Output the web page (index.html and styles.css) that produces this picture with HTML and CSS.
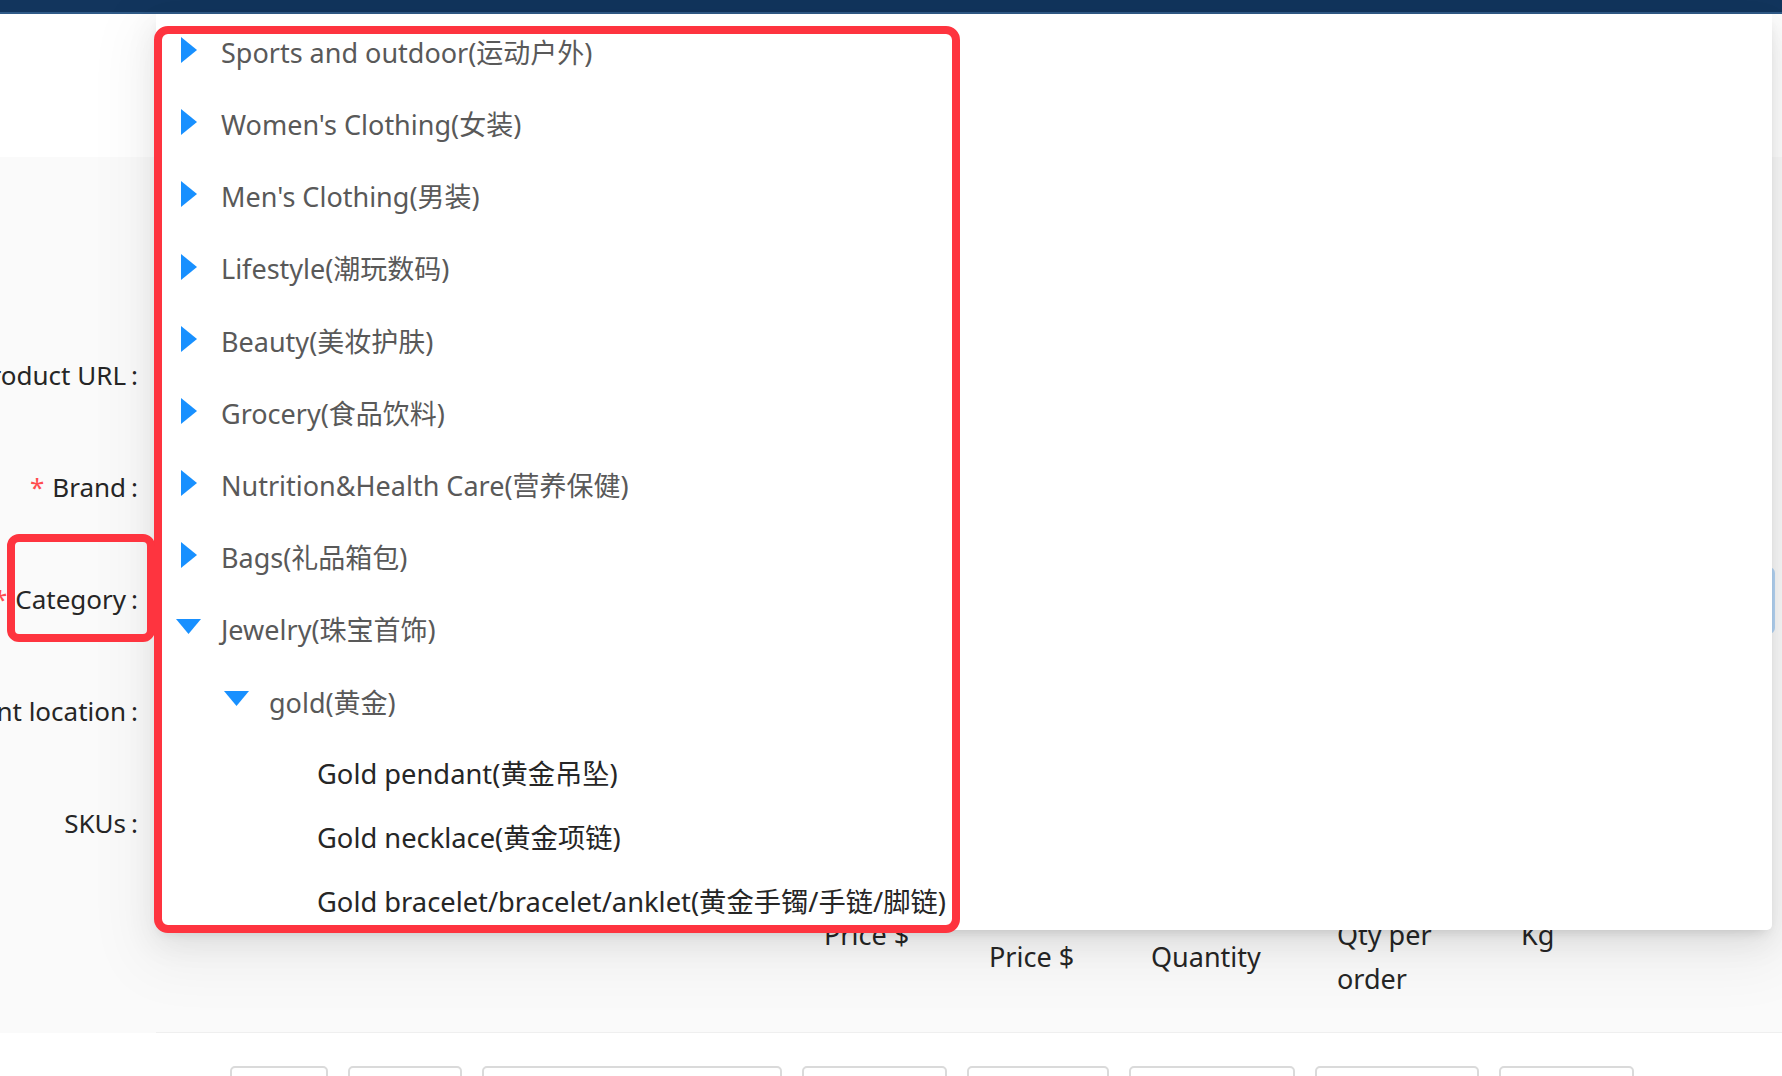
FILE: index.html
```html
<!DOCTYPE html>
<html lang="en">
<head>
<meta charset="utf-8">
<title>Product form - category</title>
<link rel="stylesheet" href="styles.css">
</head>
<body>
<div class="topbar"></div>
<div class="hero"></div>
<div class="form">
  <div class="row">
    <div class="label"><span>Product URL</span><span class="colon">:</span></div>
    <div class="control"></div>
  </div>
  <div class="row">
    <div class="label"><span class="req">*</span><span>Brand</span><span class="colon">:</span></div>
    <div class="control"></div>
  </div>
  <div class="row">
    <div class="label"><span class="req">*</span><span>Category</span><span class="colon">:</span></div>
    <div class="control"><div class="select-focus"></div></div>
  </div>
  <div class="row">
    <div class="label"><span class="req">*</span><span>Shipment location</span><span class="colon">:</span></div>
    <div class="control"></div>
  </div>
  <div class="row">
    <div class="label"><span>SKUs</span><span class="colon">:</span></div>
    <div class="control"></div>
  </div>
  <div class="skus-head">
    <div class="th c1"></div>
    <div class="th c2"></div>
    <div class="th c3"></div>
    <div class="th c4 up">Original<br>Price $</div>
    <div class="th c5">Price $</div>
    <div class="th c6">Quantity</div>
    <div class="th c7 down">Minimum<br>Qty per<br>order</div>
    <div class="th c8 up">Weight<br>Kg</div>
  </div>
</div>
<div class="skus-body">
  <div class="td c1"></div>
  <div class="td c2"></div>
  <div class="td c3"></div>
  <div class="td c4"></div>
  <div class="td c5"></div>
  <div class="td c6"></div>
  <div class="td c7"></div>
  <div class="td c8"></div>
</div>

<div class="dropdown">
  <div class="tree">
    <div class="node lvl0"><span class="sw"><svg class="tri-r" width="16" height="26" viewBox="0 0 16 26"><polygon points="0,0 16,13 0,26"/></svg></span><span class="tt">Sports and outdoor(运动户外)</span></div>
    <div class="node lvl0"><span class="sw"><svg class="tri-r" width="16" height="26" viewBox="0 0 16 26"><polygon points="0,0 16,13 0,26"/></svg></span><span class="tt">Women's Clothing(女装)</span></div>
    <div class="node lvl0"><span class="sw"><svg class="tri-r" width="16" height="26" viewBox="0 0 16 26"><polygon points="0,0 16,13 0,26"/></svg></span><span class="tt">Men's Clothing(男装)</span></div>
    <div class="node lvl0"><span class="sw"><svg class="tri-r" width="16" height="26" viewBox="0 0 16 26"><polygon points="0,0 16,13 0,26"/></svg></span><span class="tt">Lifestyle(潮玩数码)</span></div>
    <div class="node lvl0"><span class="sw"><svg class="tri-r" width="16" height="26" viewBox="0 0 16 26"><polygon points="0,0 16,13 0,26"/></svg></span><span class="tt">Beauty(美妆护肤)</span></div>
    <div class="node lvl0"><span class="sw"><svg class="tri-r" width="16" height="26" viewBox="0 0 16 26"><polygon points="0,0 16,13 0,26"/></svg></span><span class="tt">Grocery(食品饮料)</span></div>
    <div class="node lvl0"><span class="sw"><svg class="tri-r" width="16" height="26" viewBox="0 0 16 26"><polygon points="0,0 16,13 0,26"/></svg></span><span class="tt">Nutrition&amp;Health Care(营养保健)</span></div>
    <div class="node lvl0"><span class="sw"><svg class="tri-r" width="16" height="26" viewBox="0 0 16 26"><polygon points="0,0 16,13 0,26"/></svg></span><span class="tt">Bags(礼品箱包)</span></div>
    <div class="node lvl0"><span class="sw"><svg class="tri-d" width="25" height="15" viewBox="0 0 25 15"><polygon points="0,0 25,0 12.5,15"/></svg></span><span class="tt">Jewelry(珠宝首饰)</span></div>
    <div class="node lvl1"><span class="sw"><svg class="tri-d" width="25" height="15" viewBox="0 0 25 15"><polygon points="0,0 25,0 12.5,15"/></svg></span><span class="tt">gold(黄金)</span></div>
    <div class="leaves">
      <div class="node leaf"><span class="sw"></span><span class="tt">Gold pendant(黄金吊坠)</span></div>
      <div class="node leaf"><span class="sw"></span><span class="tt">Gold necklace(黄金项链)</span></div>
      <div class="node leaf"><span class="sw"></span><span class="tt">Gold bracelet/bracelet/anklet(黄金手镯/手链/脚链)</span></div>
    </div>
  </div>
</div>

<div class="mark mark-panel"></div>
<div class="mark mark-label"></div>
</body>
</html>
```
FILE: styles.css
```css
* { box-sizing: border-box; }
html, body { margin: 0; padding: 0; }
body {
  width: 1782px;
  height: 1076px;
  overflow: hidden;
  position: relative;
  background: #fff;
  font-family: "Noto Sans", "Noto Sans CJK SC", sans-serif;
  color: #262626;
}

.topbar {
  height: 14px;
  background: #12355d;
  border-bottom: 2px solid #305b88;
}
.hero { height: 143px; background: #fff; }

.form {
  background: #fafafa;
  padding-top: 163px;
}
.row {
  display: flex;
  align-items: center;
  height: 112px;
}
.label {
  width: 138px;
  flex: none;
  display: flex;
  justify-content: flex-end;
  white-space: nowrap;
  font-size: 26px;
  line-height: 1.2;
  color: #262626;
}
.req { color: #ff4d4f; margin-right: 8px; }
.colon { margin-left: 5px; }
.control {
  flex: 1;
  margin-left: 18px;
  margin-right: 7px;
  height: 67px;
}
.select-focus {
  height: 67px;
  border: 3px solid #b5d6f6;
  border-radius: 6px;
  background: #fff;
}

.skus-head, .skus-body {
  display: flex;
  gap: 20px;
}
.skus-head {
  height: 153px;
  margin-left: 156px;
  padding-left: 74px;
  align-items: flex-end;
  border-bottom: 1px solid #efefef;
}
.skus-body { padding-left: 230px; }
.th {
  flex: none;
  font-size: 27px;
  line-height: 44px;
  padding-left: 22px;
  padding-bottom: 53px;
  white-space: nowrap;
}
.th.up { padding-bottom: 75px; }
.th.down { padding-bottom: 31px; }
.c1 { width: 98px; }
.c2 { width: 114px; }
.c3 { width: 300px; }
.c4 { width: 145px; }
.c5 { width: 142px; }
.c6 { width: 166px; }
.c7 { width: 164px; }
.c8 { width: 135px; }

.skus-body { margin-top: 33px; }
.td {
  flex: none;
  height: 50px;
  border: 2px solid #dadada;
  border-radius: 5px;
  background: #fff;
}

.dropdown {
  position: absolute;
  left: 156px;
  top: 14px;
  width: 1616px;
  height: 916px;
  background: #fff;
  border-radius: 0 0 5px 5px;
  overflow: hidden;
  box-shadow: 0 6px 12px -6px rgba(0,0,0,0.16), 0 12px 32px 0 rgba(0,0,0,0.08), 0 20px 60px 16px rgba(0,0,0,0.05);
}
.tree { padding-top: 3px; }
.node {
  display: flex;
  align-items: center;
  height: 72.2px;
  white-space: nowrap;
  font-size: 27px;
  line-height: 1.2;
  color: #595959;
}
.lvl0 { padding-left: 20px; }
.lvl1 { padding-left: 68px; }
.leaves { padding-top: 3px; }
.leaf {
  padding-left: 116px;
  height: 64px;
  font-size: 27.3px;
  color: #262626;
}
.sw {
  flex: none;
  width: 25px;
  margin-right: 20px;
  display: flex;
  justify-content: center;
}
.sw svg { display: block; fill: #1890ff; }
.tri-r { margin-top: -6px; }
.tri-d { margin-top: -9px; }

.mark {
  position: absolute;
  border: 8px solid #fe343f;
  pointer-events: none;
}
.mark-panel {
  left: 154px;
  top: 26px;
  width: 806px;
  height: 907px;
  border-radius: 14px;
}
.mark-label {
  left: 7px;
  top: 534px;
  width: 148px;
  height: 108px;
  border-radius: 12px;
}
```
